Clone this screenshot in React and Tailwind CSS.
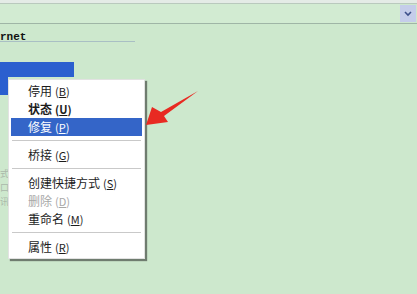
import React from "react";

const Item = ({ label, accel, bold, active, disabled }) => (
  <div
    className={`h-[18px] flex items-center pl-[17px] mx-[2px] text-[12px] leading-none ${
      active ? "bg-[#3465c8] text-white" : disabled ? "text-[#a8a8a8]" : "text-[#1c1c1c]"
    } ${bold ? "font-bold" : ""}`}
  >
    <span>{label}</span>
    <span className="ml-[3px] text-[11px]">
      (<span className="underline">{accel}</span>)
    </span>
  </div>
);

const Sep = () => (
  <div className="h-[10px] flex items-center mx-[3px]">
    <div className="w-full h-[2px] border-t border-[#c9c9c9] border-b-white" />
  </div>
);

const App = () => {
  return (
    <div
      className="relative w-[417px] h-[294px] overflow-hidden bg-[#cde8cd]"
      style={{ fontFamily: '"Noto Sans CJK SC", "Liberation Sans", sans-serif' }}
    >
      {/* window strip */}
      <div className="h-[4px] bg-[#e4ebe6] border-b border-[#b9c9bd]" />

      {/* address bar */}
      <div className="flex h-[20px] border-b border-[#9fb5a6]">
        <div className="flex-1 bg-[#d2ebd2]" />
        <div className="w-[16px] my-[1px] mr-[1px] bg-[#c5cdea] flex items-center justify-center">
          <svg width="8" height="6" viewBox="0 0 8 6">
            <path d="M1 1 L4 4 L7 1" stroke="#3d4f8a" strokeWidth="1.6" fill="none" />
          </svg>
        </div>
      </div>

      {/* heading */}
      <div className="pt-[2px] h-[17px] leading-[14px]">
        <span
          className="text-[11px] font-bold text-[#111]"
          style={{ fontFamily: '"Liberation Mono", monospace' }}
        >
          rnet
        </span>
      </div>
      <div className="w-[135px] h-[1px] bg-[#a9bfc4]" />

      {/* selected connection behind menu */}
      <div className="mt-[20px] flex flex-col">
        <div className="w-[74px] h-[15px] bg-[#2b5fcf]" />
        <div className="w-[8px] h-[18px] bg-[#2b5fcf]" />
      </div>

      {/* faint labels at left */}
      <div className="mt-[72px] w-[8px] text-[9px] leading-[14px] text-[#aab8aa] overflow-hidden">
        <div>式</div>
        <div>口</div>
        <div>讯</div>
      </div>

      {/* context menu */}
      <div className="absolute left-[8px] top-[79px] w-[137px] bg-white border border-[#e2e2e2] py-[2px] shadow-[2px_2px_1px_#6f7c6f]">
        <Item label="停用" accel="B" />
        <Item label="状态" accel="U" bold />
        <Item label="修复" accel="P" active />
        <Sep />
        <Item label="桥接" accel="G" />
        <Sep />
        <Item label="创建快捷方式" accel="S" />
        <Item label="删除" accel="D" disabled />
        <Item label="重命名" accel="M" />
        <Sep />
        <Item label="属性" accel="R" />
      </div>

      {/* red arrow */}
      <svg className="absolute left-0 top-0" width="417" height="294" viewBox="0 0 417 294">
        <polygon
          points="146,125 152,107 161,112 198,91 164,116 168,122"
          fill="#e82a22"
        />
      </svg>
    </div>
  );
};

export default App;
